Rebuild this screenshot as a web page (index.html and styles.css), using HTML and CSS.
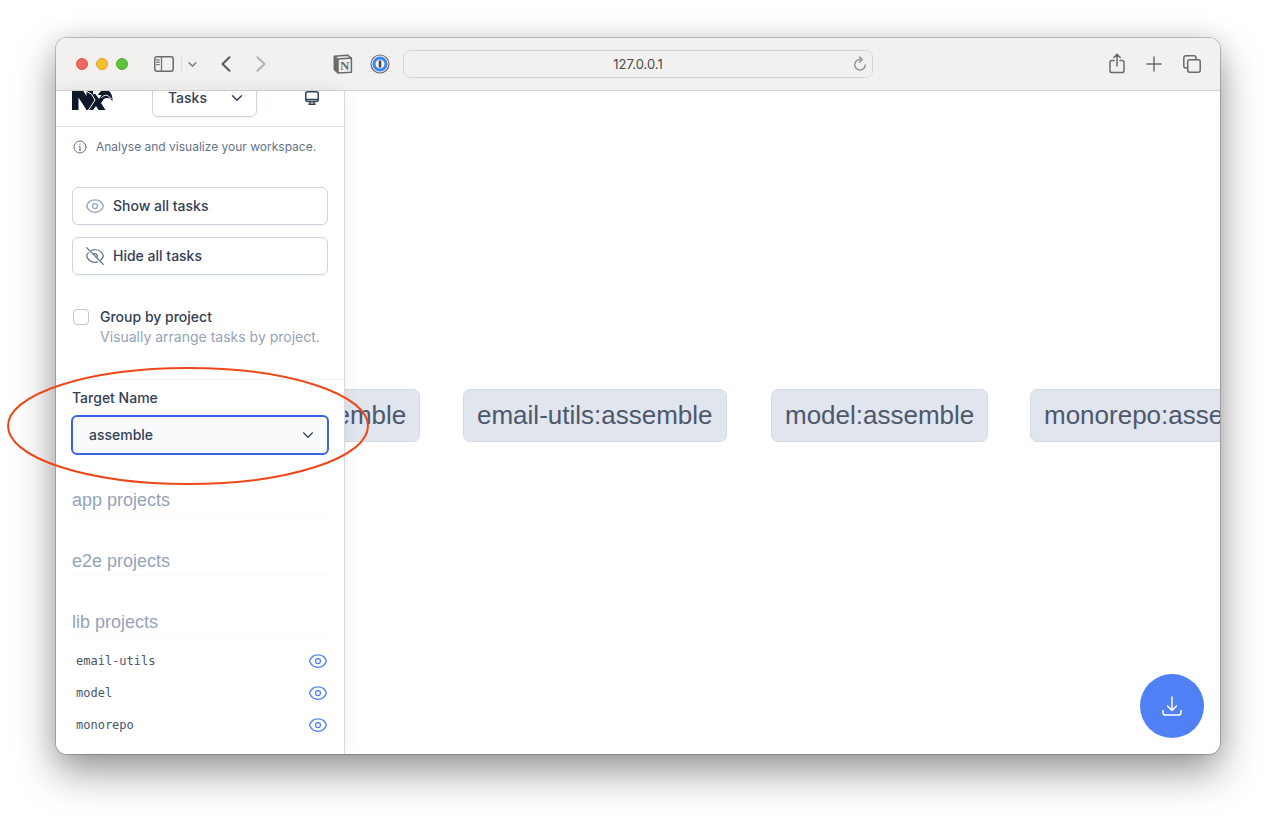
FILE: index.html
```html
<!DOCTYPE html>
<html lang="en">
<head>
<meta charset="utf-8">
<title>Nx Graph</title>
<link rel="stylesheet" href="styles.css">
</head>
<body>
<svg class="defs" width="0" height="0" aria-hidden="true">
  <symbol id="eye" viewBox="0 0 24 24"><path d="M2 12.300a1 1 0 0 1 0-.6C3.400 7.500 7.400 4.500 12 4.500s8.600 3 10 7.200a1 1 0 0 1 0 .6c-1.400 4.200-5.400 7.200-10 7.200s-8.600-3-10-7.200z"/><circle cx="12" cy="12" r="3"/></symbol>
  <symbol id="eye-off" viewBox="0 0 24 24"><path d="M4 8.200A10.500 10.500 0 0 0 1.900 12c1.300 4.300 5.300 7.500 10.100 7.500 1 0 2-.1 2.900-.4M6.200 6.200A10.500 10.500 0 0 1 12 4.500c4.800 0 8.800 3.200 10.100 7.500a10.500 10.500 0 0 1-4.300 5.800M2 2l20 20M9.900 9.900a3 3 0 0 1 4.200 4.200"/></symbol>
  <symbol id="chevron" viewBox="0 0 12 12"><path d="M1.500 3.800 6 8.200l4.500-4.400"/></symbol>
</svg>

<div class="window">
  <header class="toolbar">
    <div class="tools tools-left">
      <div class="lights"><i class="light red"></i><i class="light yellow"></i><i class="light green"></i></div>
      <button class="tool panel" aria-label="Toggle sidebar"><svg width="20" height="16" viewBox="0 0 20 16"><rect x=".8" y=".8" width="18.400" height="14.400" rx="2.200"/><path d="M7.500 1v14M2.800 3.800h2.400M2.800 6.200h2.400M2.800 8.600h2.400"/></svg></button>
      <button class="tool menu" aria-label="Tab groups"><svg width="9" height="9"><use href="#chevron"/></svg></button>
      <button class="tool back" aria-label="Back"><svg width="10" height="16" viewBox="0 0 10 16"><path d="M8.500 1.200 1.500 8l7 6.800"/></svg></button>
      <button class="tool forward" aria-label="Forward"><svg width="10" height="16" viewBox="0 0 10 16"><path d="M1.500 1.200l7 6.800-7 6.800"/></svg></button>
      <div class="extensions">
        <button class="tool" aria-label="Notion"><svg width="20" height="20" viewBox="0 0 20 20"><path class="fill" d="M1 2.500 5 6v13l-3.700-3.300z"/><path d="M1.300 2.200 14.500 1.200 18.400 4v14.200L5 19l-3.700-3.500zM1.300 2.200 5 5l13.400-1M5 5v14"/><text x="7" y="16" class="n-mark">N</text></svg></button>
        <button class="tool" aria-label="1Password"><svg width="20" height="20" viewBox="0 0 20 20"><circle cx="10" cy="10" r="9" stroke-width="1.200"/><circle cx="10" cy="10" r="6" class="ring"/><path d="M10 6.500v7" class="bar"/></svg></button>
      </div>
    </div>
    <div class="address">
      <input class="url" type="text" value="127.0.0.1" aria-label="Address">
      <button class="tool reload" aria-label="Reload"><svg width="14" height="16" viewBox="0 0 14 16"><path d="M7 3.500a5.300 5.300 0 1 0 5.300 5.300M6.500 1l2.800 2.600-2.800 2.600"/></svg></button>
    </div>
    <div class="tools tools-right">
      <button class="tool" aria-label="Share"><svg width="18" height="22" viewBox="0 0 18 22"><path d="M6 7.500H3.800A1.800 1.800 0 0 0 2 9.300v8.400a1.800 1.800 0 0 0 1.800 1.800h10.400a1.800 1.800 0 0 0 1.800-1.800V9.300a1.800 1.800 0 0 0-1.800-1.800H12M9 13V1.500M5.800 4.500 9 1.300l3.200 3.200"/></svg></button>
      <button class="tool" aria-label="New tab"><svg width="16" height="16" viewBox="0 0 16 16"><path d="M8 1v14M1 8h14"/></svg></button>
      <button class="tool" aria-label="Show tabs"><svg width="20" height="20" viewBox="0 0 20 20"><rect x="5.700" y="5.700" width="12.500" height="12.500" rx="2"/><path d="M5.500 14H3.800a2 2 0 0 1-2-2V3.800a2 2 0 0 1 2-2H12a2 2 0 0 1 2 2v1.700"/></svg></button>
    </div>
  </header>

  <div class="page">
    <aside class="sidebar">
      <div class="app-bar">
        <svg class="logo" width="41" height="28" viewBox="0 0 41 28" role="img" aria-label="Nx">
          <path d="M0 0h6.500l8 13V0H21v27h-6.500L6.500 14.500V27H0z"/>
          <path d="M17 11h6.500l3.500 5 2.500-4c2-3.500 4.500-4.500 7-2.500 3 1 4 4.500 4 9-1.500-3-3.500-4-5.500-3.500-2.500.3-3.500 1-4.500 3l-1.500 2 4.500 7h-7l-2.500-4-3 4h-7l6.500-9z"/>
          <path d="M26 12c2-4 5-5.500 8-5 4 .6 6 4 6.500 9l-5-4z"/>
          <path class="cut" d="M14.500 8.500 19.500 11l3.500 6-6.500 10M29.500 14.500c2.500-2.500 5-2.800 7-1.500l3 3"/>
        </svg>
        <button class="view">Tasks<svg width="12" height="12"><use href="#chevron"/></svg></button>
        <button class="theme" aria-label="Theme"><svg width="14" height="16" viewBox="0 0 14 16"><rect x=".8" y="1.800" width="12.400" height="9.700" rx="2"/><path d="M1 9.500h12M5 11.500v2.500M9 11.500v2.500M4 14.200h6"/></svg></button>
      </div>

      <p class="hint"><svg width="14" height="14" viewBox="0 0 14 14"><circle cx="7" cy="7" r="6"/><path d="M6.300 6.500H7V10M6.200 10h1.700M7 4v.5"/></svg>Analyse and visualize your workspace.</p>

      <div class="actions">
        <button class="action show"><svg width="20" height="20"><use href="#eye"/></svg>Show all tasks</button>
        <button class="action hide"><svg width="20" height="20"><use href="#eye-off"/></svg>Hide all tasks</button>
      </div>

      <div class="group">
        <input type="checkbox" id="group" aria-describedby="group-note">
        <div>
          <label for="group">Group by project</label>
          <p id="group-note">Visually arrange tasks by project.</p>
        </div>
      </div>

      <div class="target">
        <label for="target">Target Name</label>
        <div class="select-wrap">
          <select id="target"><option>assemble</option></select>
          <svg width="12" height="12"><use href="#chevron"/></svg>
        </div>
      </div>

      <h2>app projects</h2>
      <h2>e2e projects</h2>
      <h2>lib projects</h2>
      <ul class="projects">
        <li>email-utils<button aria-label="Toggle email-utils"><svg width="20" height="20"><use href="#eye"/></svg></button></li>
        <li>model<button aria-label="Toggle model"><svg width="20" height="20"><use href="#eye"/></svg></button></li>
        <li>monorepo<button aria-label="Toggle monorepo"><svg width="20" height="20"><use href="#eye"/></svg></button></li>
      </ul>
    </aside>

    <main class="graph">
      <div class="node node-first">assemble</div>
      <div class="node node-email">email-utils:assemble</div>
      <div class="node node-model">model:assemble</div>
      <div class="node node-monorepo">monorepo:assemble</div>
      <button class="download" aria-label="Download"><svg width="24" height="24" viewBox="0 0 24 24"><path d="M12 3v13.500M7.500 12l4.500 4.500 4.500-4.500M3 16.500v2.300A2.200 2.200 0 0 0 5.200 21h13.600a2.200 2.200 0 0 0 2.200-2.200v-2.300"/></svg></button>
    </main>
  </div>
</div>
<svg class="highlight" width="364" height="120" viewBox="0 0 364 120" aria-hidden="true"><ellipse cx="182" cy="60" rx="180" ry="58"/></svg>
</body>
</html>
```
FILE: styles.css
```css
* { box-sizing: border-box; }

body {
  position: relative;
  display: flex;
  min-height: 100vh;
  margin: 0;
  padding: 38px 56px 74px;
  background: #fff;
  color: #334155;
  font: 14px/20px Inter, "Liberation Sans", sans-serif;
  overflow: hidden;
}

svg { fill: none; stroke: currentColor; stroke-linecap: round; stroke-linejoin: round; flex: none; }
button { margin: 0; padding: 0; border: 0; background: none; color: inherit; font: inherit; }
p, h2, ul { margin: 0; padding: 0; }
.defs { position: absolute; }

.window {
  flex: 1;
  min-width: 0;
  display: flex;
  flex-direction: column;
  border-radius: 11px;
  background: #fff;
  overflow: hidden;
  box-shadow: 0 0 0 1px rgba(0, 0, 0, .2), 0 18px 40px rgba(0, 0, 0, .4), 0 0 24px rgba(0, 0, 0, .1);
}

/* Browser toolbar */
.toolbar {
  display: grid;
  grid-template-columns: 1fr minmax(0, 470px) 1fr;
  align-items: center;
  height: 53px;
  border-bottom: 1px solid #d6d5d4;
  background: #f3f1ef;
  color: #6b6a69;
}
.tools { display: flex; align-items: center; }
.tools-left { padding: 0 13px 0 20px; }
.tools-right { justify-content: flex-end; gap: 20px; padding-right: 18px; }
.tool { display: flex; stroke-width: 1.500; }
.lights { display: flex; gap: 8px; }
.light { width: 12px; height: 12px; border-radius: 50%; border: 1px solid; }
.red { background: #ee6a5f; border-color: #d9574c; }
.yellow { background: #f5bd30; border-color: #dca425; }
.green { background: #5cc43a; border-color: #4aad2b; }
.panel { margin-left: 26px; }
.panel path { stroke-width: 1.200; }
.menu { margin-left: 7px; padding: 5px 0 5px 6px; border-left: 1px solid #e2e0de; color: #858483; stroke-width: 2; }
.back { margin-left: 24px; color: #5a5958; stroke-width: 2; }
.forward { margin-left: 25px; color: #b1b0ae; stroke-width: 2; }
.extensions { display: flex; gap: 17px; margin-left: auto; }
.extensions .fill { fill: #6b6a69; stroke: none; }
.n-mark { fill: #6b6a69; stroke: none; font: bold 13px "Liberation Serif", serif; }
.ring { stroke: #3b86f7; stroke-width: 3; }
.bar { stroke: #4a4948; stroke-width: 2.500; stroke-linecap: butt; }
.address {
  display: flex;
  align-items: center;
  height: 28px;
  padding: 0 5px;
  border: 1px solid #d8d6d4;
  border-radius: 7px;
}
.url {
  flex: 1;
  min-width: 0;
  padding: 0 0 0 14px;
  border: 0;
  background: none;
  color: #4a4a4a;
  font: 13px/20px Inter, "Liberation Sans", sans-serif;
  text-align: center;
}
.reload { color: #8b8a89; stroke-width: 1.300; }

/* Page */
.page { flex: 1; display: flex; min-height: 0; }
.sidebar {
  position: relative;
  z-index: 1;
  flex: 0 0 289px;
  border-right: 1px solid #d5d8dd;
  background: #fff;
  box-shadow: 0 0 16px rgba(0, 0, 0, .07);
  overflow: hidden;
}
.app-bar {
  display: flex;
  align-items: flex-end;
  height: 36px;
  padding: 0 25px 9px 16px;
  border-bottom: 1px solid #e2e4e8;
  overflow: hidden;
}
.logo { margin-bottom: 6px; fill: #0f172a; stroke: none; }
.logo .cut { fill: none; stroke: #fff; stroke-width: 1; }
.view {
  display: flex;
  align-items: center;
  justify-content: space-between;
  width: 105px;
  height: 38px;
  margin-left: 39px;
  padding: 0 13px 0 15px;
  border: 1px solid #cbd5e1;
  border-radius: 6px;
  box-shadow: 0 1px 2px rgba(0, 0, 0, .05);
  font-weight: 500;
  stroke-width: 1.500;
}
.theme { display: flex; margin: 0 0 11px auto; stroke-width: 1.500; }
.hint {
  display: flex;
  align-items: center;
  gap: 9px;
  padding: 10px 17px 30px;
  color: #64748b;
  font-size: 12px;
}
.actions { display: grid; gap: 12px; padding: 0 16px; }
.action {
  display: flex;
  align-items: center;
  gap: 8px;
  height: 38px;
  padding: 0 12px;
  border: 1px solid #cbd5e1;
  border-radius: 6px;
  box-shadow: 0 1px 2px rgba(0, 0, 0, .05);
  font-weight: 500;
  stroke-width: 1.500;
}
.show svg { color: #94a3b8; }
.hide svg { color: #64748b; }
.group { display: flex; gap: 11px; padding: 32px 17px; }
.group input {
  appearance: none;
  width: 16px;
  height: 16px;
  margin: 2px 0;
  border: 1px solid #c3c6ca;
  border-radius: 4px;
  background: #fff;
}
.group label { display: block; font-weight: 500; }
.group p { color: #94a3b8; white-space: nowrap; }
.target { padding: 8px 15px 31px; border-top: 1px solid #f1f3f6; }
.target label { display: block; padding: 0 1px 7px; font-weight: 500; }
.select-wrap { display: grid; align-items: center; }
.select-wrap > * { grid-area: 1 / 1; }
.select-wrap svg { justify-self: end; margin-right: 15px; stroke-width: 1.200; pointer-events: none; }
.target select {
  appearance: none;
  width: 100%;
  height: 40px;
  padding: 0 16px;
  border: 2px solid #3b63e6;
  border-radius: 6px;
  background: #f8fafc;
  color: #334155;
  font: 500 14px/20px Inter, "Liberation Sans", sans-serif;
}
.sidebar h2 {
  margin: 0 16px 32px;
  border-bottom: 1px solid #f8fafc;
  color: #94a3b8;
  font: 400 18px/28px "Liberation Sans", sans-serif;
}
.projects { list-style: none; margin: -24px 16px 0; }
.projects li {
  display: flex;
  align-items: center;
  justify-content: space-between;
  height: 32px;
  padding-left: 4px;
  color: #475569;
  font: 12px/16px "DejaVu Sans Mono", monospace;
}
.projects button { display: flex; color: #4f7df5; stroke-width: 1.500; }

/* Task graph */
.graph { position: relative; flex: 1; min-width: 0; overflow: hidden; }
.node {
  position: absolute;
  top: 298px;
  padding: 9px 13px;
  border: 1px solid #d3dbe7;
  border-radius: 7px;
  background: #e1e5ee;
  color: #4d586c;
  font: 26px/33px "Liberation Sans", sans-serif;
  white-space: nowrap;
}
.node-first { left: -64px; }
.node-email { left: 118px; }
.node-model { left: 426px; }
.node-monorepo { left: 685px; }
.download {
  position: absolute;
  right: 16px;
  bottom: 16px;
  display: grid;
  place-items: center;
  width: 64px;
  height: 64px;
  border-radius: 50%;
  background: #5080f6;
  color: #fff;
  stroke-width: 1.500;
}

.highlight { position: absolute; left: 6px; top: 366px; z-index: 2; stroke: #ee4719; stroke-width: 2; pointer-events: none; }
```
